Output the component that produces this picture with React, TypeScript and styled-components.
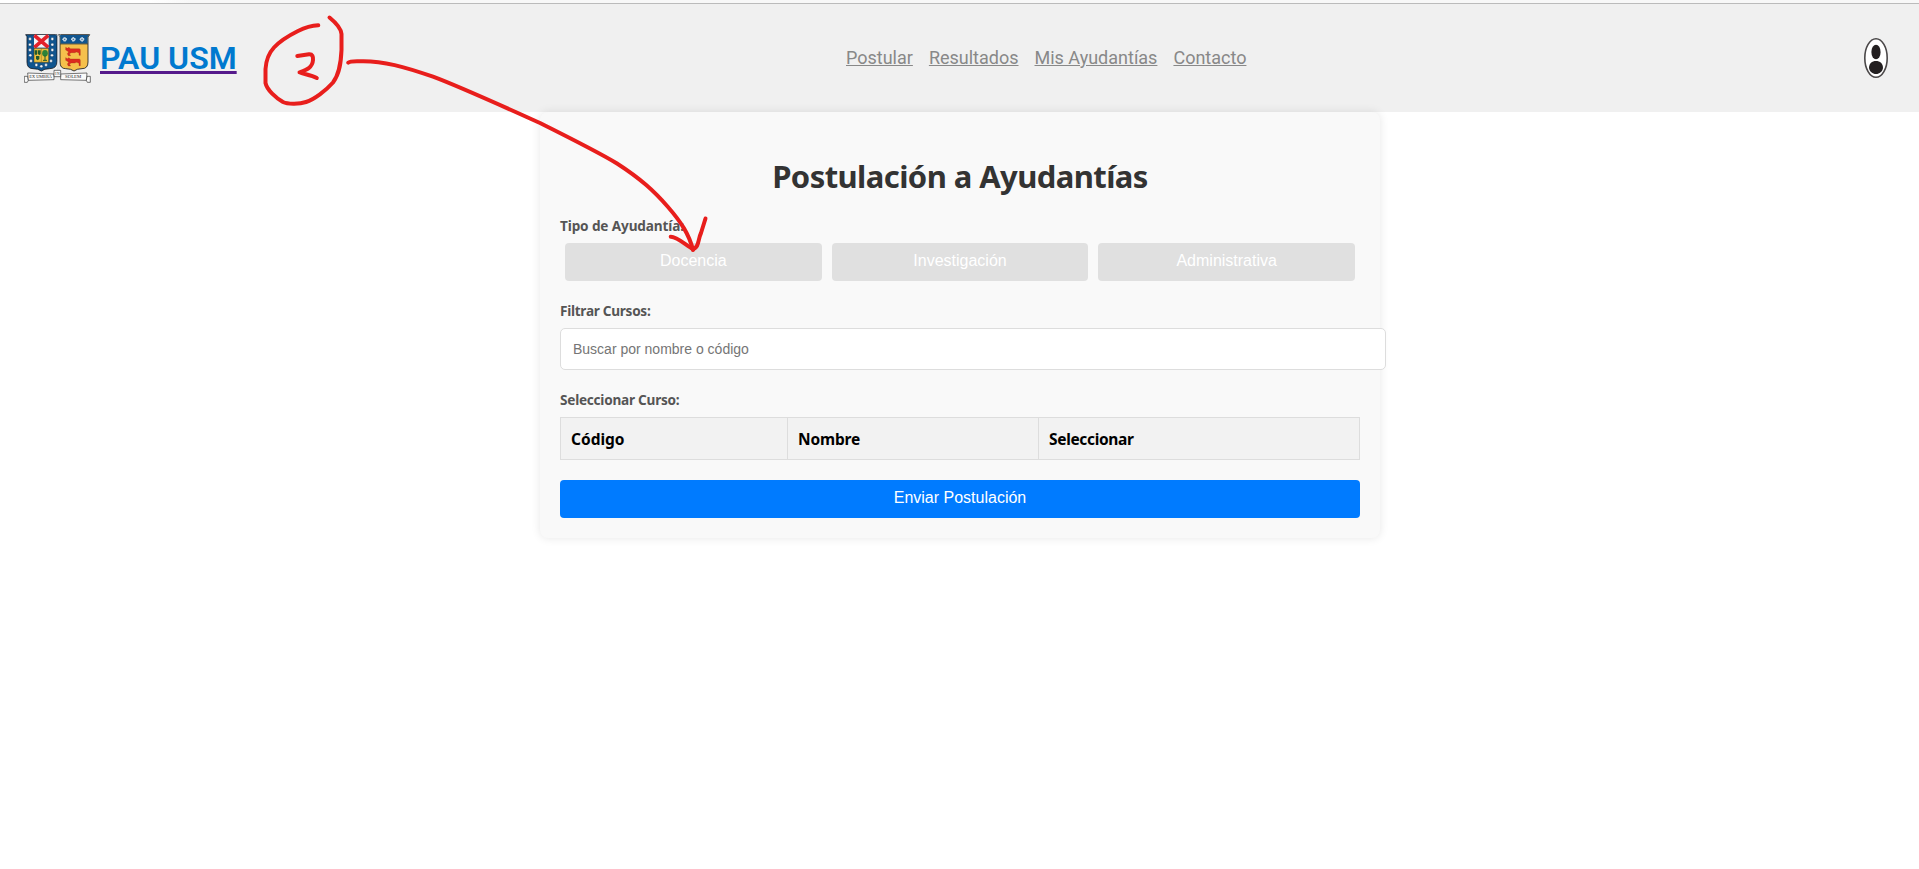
import React from 'react';
import styled, { createGlobalStyle } from 'styled-components';

const GlobalStyle = createGlobalStyle`
  html, body { margin: 0; padding: 0; background: #fff; }
  body { font-family: 'Noto Sans', sans-serif; overflow: hidden; }
`;

const Page = styled.div`
  position: relative;
  display: flex;
  flex-direction: column;
  height: 869px;
  overflow: hidden;
`;

const TopEdge = styled.div`
  flex: none;
  height: 3px;
  background: linear-gradient(90deg, #fff 0 150px, #f8f8f8 190px);
`;

const Header = styled.header`
  flex: none;
  display: flex;
  align-items: center;
  box-sizing: border-box;
  height: 109px;
  padding: 0 31px 0 24px;
  border-top: 1px solid #bbb;
  background: #f0f0f0;
  font-family: Roboto, sans-serif;
`;

const Brand = styled.a`
  display: flex;
  align-items: center;
  gap: 9px;
  width: 822px;
  text-decoration: none;
`;

const BrandName = styled.span`
  height: 38px;
  font-size: 32px;
  line-height: 38px;
  font-weight: 600;
  color: #0079cf;
  text-decoration: underline #551a8b;
  text-decoration-skip-ink: none;
  text-decoration-thickness: 3px;
  text-underline-offset: 2px;
`;

const Nav = styled.nav`
  display: flex;
  gap: 16px;
`;

const NavLink = styled.a`
  font-size: 18px;
  line-height: 22px;
  color: #888;
  text-decoration: underline;
`;

const Profile = styled.button`
  display: flex;
  margin: 0 0 0 auto;
  padding: 0;
  border: 0;
  background: none;
`;

const Card = styled.main`
  position: relative;
  box-sizing: border-box;
  flex: none;
  display: flex;
  flex-direction: column;
  width: 840px;
  height: 426px;
  margin: 0 auto 0 540px;
  padding: 43px 20px 20px;
  border-radius: 8px;
  background: #f9f9f9;
  box-shadow: 0 0 10px rgba(0, 0, 0, 0.1);
`;

const Title = styled.h1`
  margin: 0 0 19px;
  font-size: 31px;
  line-height: 42px;
  font-weight: 700;
  letter-spacing: -0.58px;
  text-align: center;
  color: #333;
`;

const Label = styled.label<{ $tracking: number }>`
  display: block;
  height: 20px;
  margin-bottom: 7px;
  font-size: 13.6px;
  line-height: 20px;
  font-weight: 700;
  letter-spacing: ${(p) => p.$tracking}px;
  color: #555;
`;

const Options = styled.div`
  display: flex;
  gap: 10px;
  margin: 0 5px 20px;
`;

const Button = styled.button<{ $primary?: boolean }>`
  flex: 1;
  box-sizing: border-box;
  height: 38px;
  padding: 0 0 2px;
  border: 0;
  border-radius: 4px;
  font: 16px/18px 'Liberation Sans', sans-serif;
  color: #fff;
  background: ${(p) => (p.$primary ? '#007bff' : '#e0e0e0')};
`;

const Search = styled.input`
  box-sizing: border-box;
  flex: none;
  width: 826px;
  height: 42px;
  margin: 0 0 20px;
  padding: 0 12px;
  border: 1px solid #ddd;
  border-radius: 5px;
  background: #fff;
  font: 14px 'Liberation Sans', sans-serif;
  &::placeholder { color: #757575; opacity: 1; }
`;

const CourseTable = styled.div`
  box-sizing: border-box;
  flex: none;
  display: grid;
  grid-template-columns: 226px 251px 1fr;
  height: 43px;
  margin-bottom: 20px;
  border: 1px solid #ddd;
  background: #f2f2f2;
`;

const ColumnHead = styled.div<{ $tracking: number }>`
  box-sizing: border-box;
  padding: 1px 10px 0;
  font-size: 15.5px;
  line-height: 41px;
  font-weight: 700;
  letter-spacing: ${(p) => p.$tracking}px;
  color: #000;
  & + & { border-left: 1px solid #ddd; }
`;

const Submit = styled.div`
  display: flex;
`;

const Ink = styled.svg`
  position: absolute;
  left: 0;
  top: 0;
  pointer-events: none;
`;

const studs = [
  [91, 117], [91, 134], [91, 150], [92, 166], [94, 183],
  [158, 117], [158, 134], [158, 150], [157, 166], [154, 183],
  [110, 195], [139, 195], [125, 199],
];

function Crest() {
  return (
    <svg width="67" height="50" viewBox="73 99 201 150">
      <path d="M78 104H172V184Q172 206 150 206Q134 206 125 213Q116 206 100 206Q82 206 82 186V110Z" fill="#10558f" stroke="#141c26" strokeWidth="2.5" />
      <path d="M103 105H147V143H103Z" fill="#f2f4f6" />
      <path d="M104 106L146 142M146 106L104 142" stroke="#e3222b" strokeWidth="11" />
      <path d="M103 145H147V187H103Z" fill="#efbf3e" stroke="#3b3c25" strokeWidth="1.5" />
      <path d="M125 145V187" stroke="#8a6a20" strokeWidth="1.5" />
      <path d="M105 151H113V162L109 166L105 162ZM115 151H123V162L119 166L115 162ZM109 168H119V177L114 181L109 177Z" fill="#235b2c" />
      <ellipse cx="136" cy="160" rx="8.500" ry="10" fill="#2c8238" />
      <path d="M136 166V181M130 181H142" stroke="#225a28" strokeWidth="3" />
      {studs.map(([x, y]) => (
        <circle key={`${x}-${y}`} cx={x} cy={y} r="4.300" fill="#f4f7fa" stroke="#1c3550" strokeWidth="1" />
      ))}
      <path d="M177 104H270L265 111V186Q265 206 247 206Q232 206 223 213Q214 206 198 206Q181 206 181 186V111Z" fill="#f5c04c" stroke="#171b20" strokeWidth="2.500" />
      <path d="M179 105H268L264 111V131H182V111Z" fill="#10558f" />
      <path d="M181 132H265" stroke="#2a303a" strokeWidth="2" />
      {[195, 221, 247].map((x) => (
        <g key={x}>
          <circle cx={x} cy="118" r="5.500" fill="#b9cfe0" stroke="#eef4f8" strokeWidth="3" strokeDasharray="3 1.500" />
          <circle cx={x} cy="118" r="2" fill="#315f88" />
        </g>
      ))}
      {[0, 31].map((dy) => (
        <path
          key={dy}
          transform={`translate(0 ${dy})`}
          d="M198 142L203 145L208 142L212 146H239Q243 147 242 152V166H238V159L231 156L225 158H215L209 161L213 167H206L203 161L207 156L202 152L198 150Z"
          fill="#dc2a1f"
          stroke="#8a2a1c"
          strokeWidth="0.8"
        />
      ))}
      <path d="M168 104Q174 103 174 111V218M184 104Q177 103 178 111V212" fill="none" stroke="#cfd3d7" strokeWidth="1.500" />
      <g fill="#fafafa" stroke="#333" strokeWidth="2">
        <path d="M84 229H74V247H83L86 241Z" />
        <path d="M262 229H272V247H263L260 241Z" />
        <path d="M84 219L163 222V239L86 241Z" />
        <path d="M262 219L183 222V239L260 241Z" />
        <path d="M163 211H183V230H163Z" />
      </g>
      <g fill="#292929" fontFamily="Liberation Serif, serif" fontSize="13">
        <text x="89" y="235" textLength="68" lengthAdjust="spacingAndGlyphs">EX UMBRA</text>
        <text x="167" y="225" fontSize="11" textLength="13">IN</text>
        <text x="196" y="235" textLength="49" lengthAdjust="spacingAndGlyphs">SOLEM</text>
      </g>
    </svg>
  );
}

function ProfileIcon() {
  return (
    <svg width="24" height="40" viewBox="0 0 24 40">
      <ellipse cx="12" cy="20" rx="11.200" ry="19.200" fill="#fff" stroke="#4a4748" strokeWidth="1.600" />
      <ellipse cx="12" cy="14" rx="4.600" ry="7.300" fill="#231f20" />
      <path d="M5 30C5 25.500 8 23 12 23S19 25.500 19 30C18.500 33.500 15.500 36 12 36S5.500 33.500 5 30Z" fill="#231f20" />
    </svg>
  );
}

function Annotation() {
  return (
    <Ink width="760" height="270" viewBox="0 0 760 270" fill="none" stroke="#e81e1c" strokeWidth="4" strokeLinecap="round" strokeLinejoin="round">
      <path d="M318.300 25.300C311 25.600 304 28 298 31C290 35 280 41 274 47.500C268 54 266 61 265.500 69V83C267 90 276 98 283 102C288 104.500 300 104 306 102C314 99.500 326 90.500 333 82.500C340 73 341 61 341.500 50V34C341 27.500 335 22 329.500 17.500" />
      <path d="M297.300 56L309 54.300C312.500 54 313.200 56.500 313 60C312.500 68 306 70 299.500 72.300C303 74 311 75 316.800 78" />
      <path d="M348.300 62.700C350 61 354 61.300 360 61.300C383 60.600 405 67 433 76.700C458 86 500 105 540 123C568 137 600 153 617 163.500C641 179 654 191 668 207C681 222 689 234 693 250" />
      <path d="M670.700 236.700C677 236.500 687 246 693 249C699 248 698 239 701 233L705.500 218.500" />
    </Ink>
  );
}

export default function App() {
  return (
    <>
      <GlobalStyle />
      <Page>
        <TopEdge />
        <Header>
          <Brand>
            <Crest />
            <BrandName>PAU USM</BrandName>
          </Brand>
          <Nav>
            <NavLink>Postular</NavLink>
            <NavLink>Resultados</NavLink>
            <NavLink>Mis Ayudantías</NavLink>
            <NavLink>Contacto</NavLink>
          </Nav>
          <Profile aria-label="Perfil">
            <ProfileIcon />
          </Profile>
        </Header>
        <Card>
          <Title>Postulación a Ayudantías</Title>
          <Label $tracking={-0.13}>Tipo de Ayudantía:</Label>
          <Options>
            <Button>Docencia</Button>
            <Button>Investigación</Button>
            <Button>Administrativa</Button>
          </Options>
          <Label $tracking={-0.28}>Filtrar Cursos:</Label>
          <Search placeholder="Buscar por nombre o código" />
          <Label $tracking={-0.24}>Seleccionar Curso:</Label>
          <CourseTable>
            <ColumnHead $tracking={0}>Código</ColumnHead>
            <ColumnHead $tracking={-0.15}>Nombre</ColumnHead>
            <ColumnHead $tracking={-0.33}>Seleccionar</ColumnHead>
          </CourseTable>
          <Submit>
            <Button $primary>Enviar Postulación</Button>
          </Submit>
        </Card>
        <Annotation />
      </Page>
    </>
  );
}
